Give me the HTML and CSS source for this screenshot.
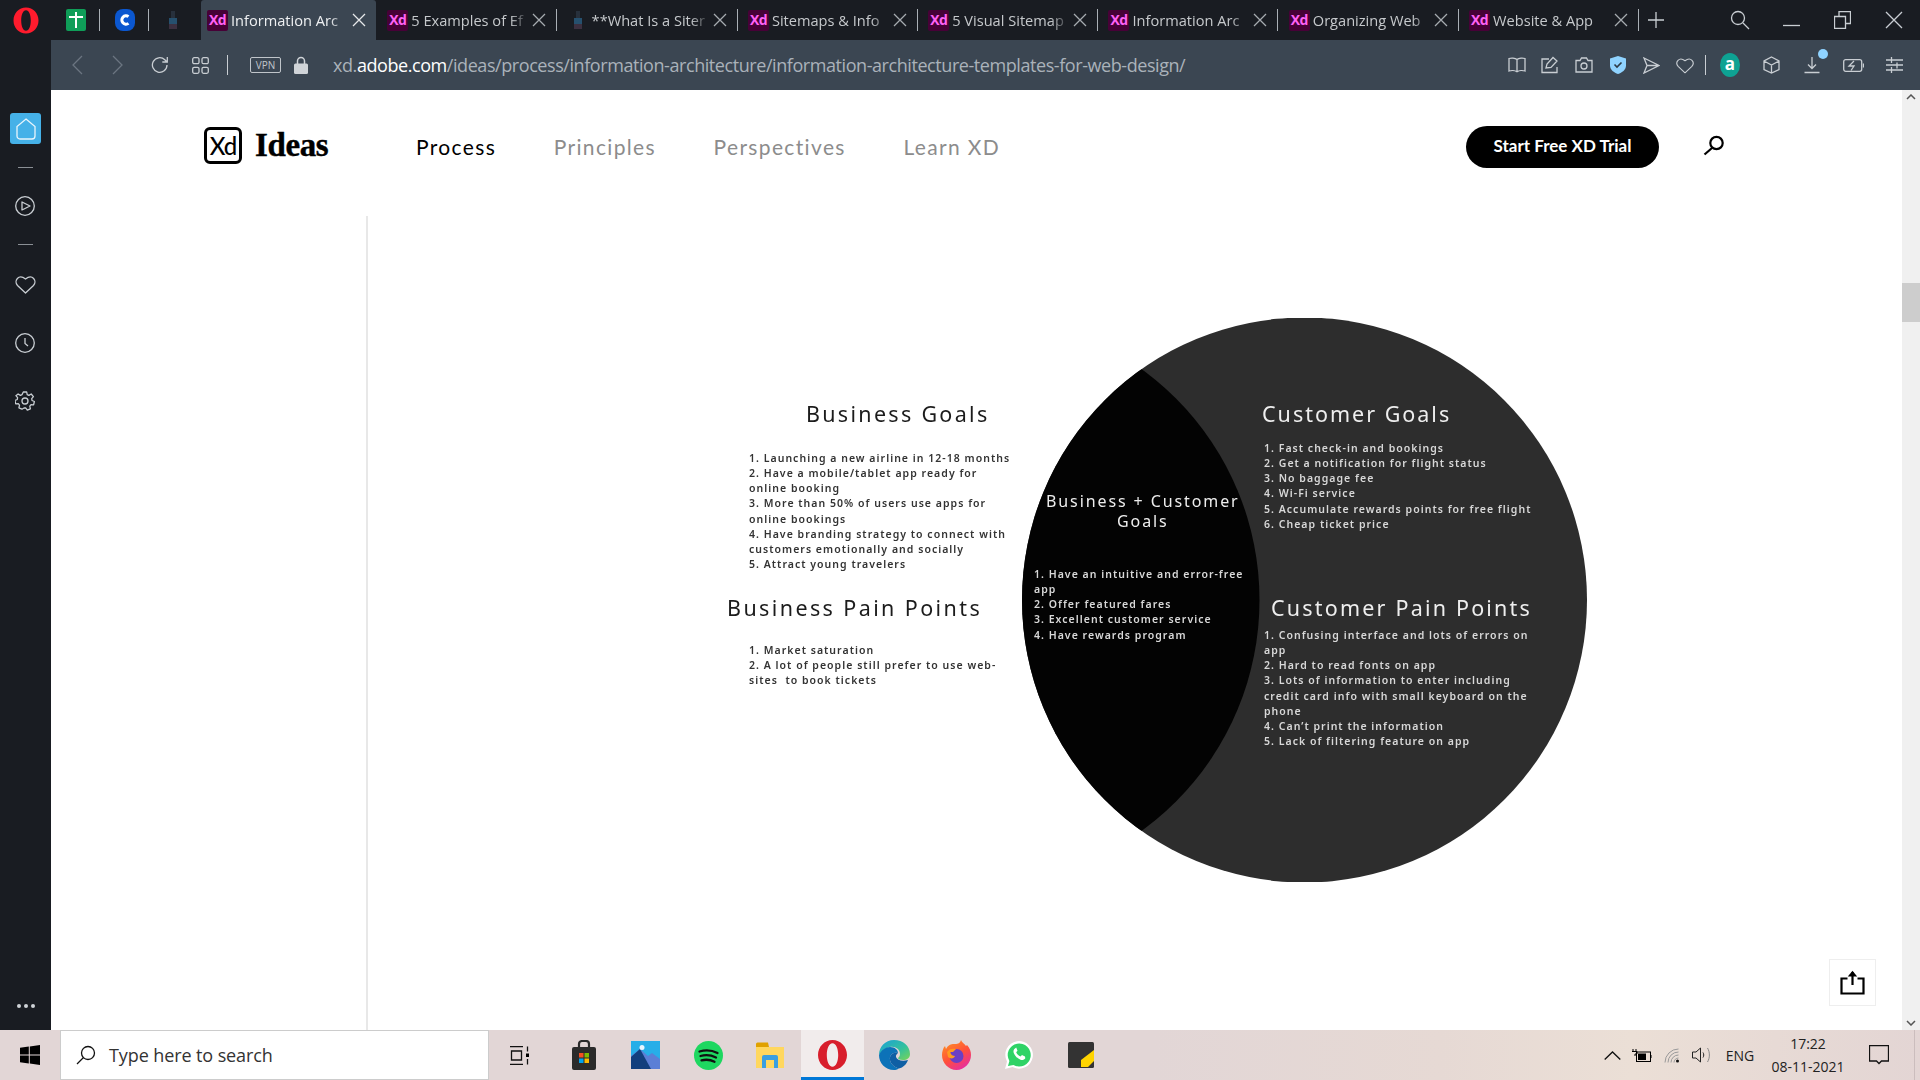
FILE: index.html
```html
<!DOCTYPE html>
<html lang="en">
<head>
<meta charset="utf-8">
<title>Information Architecture Templates</title>
<link rel="stylesheet" href="styles.css">
</head>
<body>
<div class="tabbar">
  <div class="opera-spot">
    <svg width="26" height="27" viewBox="0 0 26 27"><path fill="#ff1b2d" fill-rule="evenodd" d="M13 0.5C20.2 0.5 25.5 6.2 25.5 13.5S20.2 26.5 13 26.5 0.5 20.8 0.5 13.5 5.8 0.5 13 0.5ZM13 3.2C10 3.2 8.2 7.8 8.2 13.5S10 23.8 13 23.8 17.8 19.2 17.8 13.5 16 3.2 13 3.2Z"/></svg>
  </div>
  <div class="pin pin-a">
    <svg width="20" height="22" viewBox="0 0 20 22"><rect width="20" height="22" rx="2" fill="#0f9d58"/><path d="M3 8h14M10 3v16" stroke="#fff" stroke-width="2"/></svg>
  </div>
  <div class="pin pin-b">
    <svg width="20" height="22" viewBox="0 0 20 22"><rect width="20" height="22" rx="8" fill="#0b57d0"/><path d="M13.5 7.6a4.2 4.2 0 1 0 0 6.8" fill="none" stroke="#fff" stroke-width="3"/></svg>
  </div>
  <div class="pin pin-c">
    <svg width="10" height="20" viewBox="0 0 10 20"><rect x="3" y="1" width="4" height="7" fill="#27303c"/><rect x="1" y="8" width="8" height="6" fill="#26506e"/><rect x="1" y="14" width="8" height="5" fill="#3c3040"/></svg>
  </div>

  <div class="tab tab-active"><span class="xd">Xd</span><span class="tab-title">Information Arc</span><svg class="tab-x" width="14" height="14" viewBox="0 0 14 14"><path d="M1 1l12 12M13 1L1 13"/></svg></div><i class="tab-sep tab-sep-none"></i>
  <div class="tab"><span class="xd">Xd</span><span class="tab-title">5 Examples of Ef</span><svg class="tab-x" width="14" height="14" viewBox="0 0 14 14"><path d="M1 1l12 12M13 1L1 13"/></svg></div><i class="tab-sep"></i>
  <div class="tab"><span class="figure"><svg width="10" height="20" viewBox="0 0 10 20"><rect x="3" y="1" width="4" height="7" fill="#27303c"/><rect x="1" y="8" width="8" height="6" fill="#26506e"/><rect x="1" y="14" width="8" height="5" fill="#3c3040"/></svg></span><span class="tab-title">**What Is a Siter</span><svg class="tab-x" width="14" height="14" viewBox="0 0 14 14"><path d="M1 1l12 12M13 1L1 13"/></svg></div><i class="tab-sep"></i>
  <div class="tab"><span class="xd">Xd</span><span class="tab-title">Sitemaps &amp; Info</span><svg class="tab-x" width="14" height="14" viewBox="0 0 14 14"><path d="M1 1l12 12M13 1L1 13"/></svg></div><i class="tab-sep"></i>
  <div class="tab"><span class="xd">Xd</span><span class="tab-title">5 Visual Sitemap</span><svg class="tab-x" width="14" height="14" viewBox="0 0 14 14"><path d="M1 1l12 12M13 1L1 13"/></svg></div><i class="tab-sep"></i>
  <div class="tab"><span class="xd">Xd</span><span class="tab-title">Information Arc</span><svg class="tab-x" width="14" height="14" viewBox="0 0 14 14"><path d="M1 1l12 12M13 1L1 13"/></svg></div><i class="tab-sep"></i>
  <div class="tab"><span class="xd">Xd</span><span class="tab-title">Organizing Web</span><svg class="tab-x" width="14" height="14" viewBox="0 0 14 14"><path d="M1 1l12 12M13 1L1 13"/></svg></div><i class="tab-sep"></i>
  <div class="tab"><span class="xd">Xd</span><span class="tab-title">Website &amp; App</span><svg class="tab-x" width="14" height="14" viewBox="0 0 14 14"><path d="M1 1l12 12M13 1L1 13"/></svg></div><i class="tab-sep"></i>

  <div class="plus"><svg class="ln" width="16" height="16" viewBox="0 0 16 16"><path d="M0 8h16M8 0v16"/></svg></div>
  <div class="win-controls">
    <div class="win-slot"><svg class="ln" width="20" height="20" viewBox="0 0 20 20"><circle cx="8" cy="8" r="6.5"/><path d="M13 13l6 6"/></svg></div>
    <div class="win-slot"><svg class="ln" width="17" height="17" viewBox="0 0 17 17"><path d="M0 13.5h17"/></svg></div>
    <div class="win-slot"><svg class="ln" width="17" height="18" viewBox="0 0 17 18"><path d="M0.5 5.5h11v12h-11zM5 5.5V0.5h11.5v12H11.5"/></svg></div>
    <div class="win-slot"><svg class="ln" width="18" height="18" viewBox="0 0 18 18"><path d="M1 1l16 16M17 1L1 17"/></svg></div>
  </div>
</div>

<div class="shell">
  <aside class="sidebar">
    <div class="home"><svg class="ln" width="20" height="22" viewBox="0 0 20 22"><path d="M10 1L19 8.5V18a3 3 0 0 1-3 3H4a3 3 0 0 1-3-3V8.5Z"/></svg></div>
    <hr class="side-rule side-rule-a">
    <div class="side-slot side-play"><svg class="ln" width="20" height="20" viewBox="0 0 20 20"><circle cx="10" cy="10" r="9.3"/><path d="M7 6l8 4-8 4z" stroke-linejoin="round"/></svg></div>
    <hr class="side-rule side-rule-b">
    <div class="side-slot side-heart"><svg class="ln" width="21" height="19" viewBox="0 0 21 19"><path d="M10.5 18L2.5 10.5C-1.5 6 3.5-1.5 10.5 4 17.500-1.500 22.500 6 18.500 10.500Z" stroke-linejoin="round"/></svg></div>
    <div class="side-slot side-clock"><svg class="ln" width="20" height="20" viewBox="0 0 20 20"><circle cx="10" cy="10" r="9.300"/><path d="M10 5v5.500l3 2.500"/></svg></div>
    <div class="side-slot side-gear"><svg class="ln" width="20" height="20" viewBox="0 0 20 20"><circle cx="10" cy="10" r="3"/><path d="M8.300 1h3.400l.5 2.600 1.700.8 2.300-1.400 2.200 2.700-1.700 2 .3 1.800 2.400 1-.8 3.300-2.600-.1-1.200 1.500.6 2.600-3.100 1.400-1.500-2.200h-1.800L7 18.200l-3.100-1.400.6-2.600-1.200-1.500-2.600.1-.8-3.300 2.400-1 .3-1.800-1.700-2L3.100 3l2.300 1.400 1.700-.8z" stroke-linejoin="round"/></svg></div>
    <div class="side-dots"><i></i><i></i><i></i></div>
  </aside>

  <div class="column">
    <div class="addressbar">
      <div class="nav-slot dim"><svg class="ln" width="11" height="20" viewBox="0 0 11 20"><path d="M10 1L1 10l9 9"/></svg></div>
      <div class="nav-slot dim"><svg class="ln" width="11" height="20" viewBox="0 0 11 20"><path d="M1 1l9 9-9 9"/></svg></div>
      <div class="nav-slot nav-reload"><svg class="ln" width="18" height="18" viewBox="0 0 18 18"><path d="M16 9a7.300 7.300 0 1 1-2.200-5.200L16 6M16.300 1v5h-5"/></svg></div>
      <div class="nav-slot"><svg class="ln" width="17" height="17" viewBox="0 0 17 17"><rect x=".7" y=".7" width="6.300" height="6" rx="1.500"/><rect x="10" y=".7" width="6.300" height="6" rx="1.500"/><rect x=".7" y="10.300" width="6.300" height="6" rx="1.500"/><rect x="10" y="10.300" width="6.300" height="6" rx="1.500"/></svg></div>
      <i class="bar-sep bar-sep-left"></i>
      <span class="vpn">VPN</span>
      <svg class="lock" width="14" height="18" viewBox="0 0 14 18"><path d="M3.500 8V5a3.500 3.500 0 0 1 7 0v3" fill="none" stroke="#d0d4d8" stroke-width="1.500"/><rect y="7.500" width="14" height="10.500" rx="1.500" fill="#d0d4d8"/></svg>
      <div class="url">xd.<b>adobe.com</b>/ideas/process/information-architecture/information-architecture-templates-for-web-design/</div>
      <div class="bar-tools">
        <div class="tool"><svg class="ln" width="18" height="16" viewBox="0 0 18 16"><path d="M9 2.500C7 .8 3 .8 1 1.500v12.500c2-.7 6-.7 8 .8 2-1.500 6-1.500 8-.8V1.500C15 .8 11 .8 9 2.500zM9 2.500v12.300"/></svg></div>
        <div class="tool"><svg class="ln" width="18" height="18" viewBox="0 0 18 18"><path d="M8 3H1v13.500h15V11M5 12l1-4 6-6.500 4 3.500-6 6.500zM1 16.500h15"/></svg></div>
        <div class="tool"><svg class="ln" width="18" height="16" viewBox="0 0 18 16"><path d="M1 3.500h4l1.500-2.500h5L13 3.500h4V15H1z"/><circle cx="9" cy="9" r="3"/></svg></div>
        <div class="tool"><svg width="16" height="18" viewBox="0 0 16 18"><path d="M8 0l8 2.500v7C16 14 12 16.500 8 18 4 16.500 0 14 0 9.500v-7z" fill="#8fd3ff"/><path d="M4.500 8.500l2.500 2.500 4.500-4.500" fill="none" stroke="#2d3a46" stroke-width="1.600"/></svg></div>
        <div class="tool"><svg class="ln" width="17" height="17" viewBox="0 0 17 17"><path d="M1 1l15 7.500L1 16l3-7.500zM4 8.500h12"/></svg></div>
        <div class="tool"><svg class="ln" width="18" height="17" viewBox="0 0 21 19"><path d="M10.500 18L2.500 10.500C-1.500 6 3.500-1.500 10.500 4 17.500-1.500 22.500 6 18.500 10.500Z" stroke-linejoin="round"/></svg></div>
        <i class="bar-sep bar-sep-right"></i>
        <div class="tool tool-wide"><span class="amz">a</span></div>
        <div class="tool tool-wide"><svg class="ln" width="17" height="18" viewBox="0 0 17 18"><path d="M8.500 1L16 5v8.500L8.500 17 1 13.500V5zM1 5l7.500 4L16 5M8.500 9v8"/></svg></div>
        <div class="tool tool-wide tool-dl"><svg class="ln" width="16" height="18" viewBox="0 0 16 18"><path d="M8 1v11M4 8.500L8 12.500l4-4M0.500 16.500h15"/></svg><i class="dl-dot"></i></div>
        <div class="tool tool-wide"><svg class="ln" width="21" height="13" viewBox="0 0 21 13"><rect x=".7" y=".7" width="18" height="11.600" rx="2"/><path d="M20.500 4.500v4M11 2L6 7h5l-3 4.500"/></svg></div>
        <div class="tool tool-wide"><svg class="ln" width="17" height="16" viewBox="0 0 17 16"><path d="M0 3h17M0 8h17M0 13h17"/><path d="M5.500 0v6M11 5.500v6M5.500 10v6"/></svg></div>
      </div>
    </div>

    <div class="viewport">
      <main class="page">
        <header class="site-header">
          <div class="brand">
            <span class="xd-badge">Xd</span>
            <span class="brand-name">Ideas</span>
          </div>
          <nav class="site-nav">
            <a class="nav-on">Process</a>
            <a>Principles</a>
            <a>Perspectives</a>
            <a>Learn XD</a>
          </nav>
          <a class="cta">Start Free XD Trial</a>
          <svg class="site-search" width="24" height="24" viewBox="0 0 24 24"><circle cx="14.500" cy="9" r="6.200" fill="none" stroke="#000" stroke-width="2.200"/><path d="M10 14L2.500 20.500" stroke="#000" stroke-width="2.200"/></svg>
        </header>

        <div class="article">
          <div class="rail"></div>
          <div class="stage">
            <div class="diagram">
              <svg class="venn" width="565" height="564" viewBox="0 0 565 564">
                <defs><clipPath id="lens"><circle cx="-47.500" cy="282" r="285"/></clipPath></defs>
                <circle cx="282.500" cy="282" r="282.500" fill="#2d2d2d"/>
                <circle cx="282.500" cy="282" r="282.500" fill="#030303" clip-path="url(#lens)"/>
              </svg>

              <h2 class="head head-bg">Business Goals</h2>
              <p class="list list-bg">1. Launching a new airline in 12-18 months<br>2. Have a mobile/tablet app ready for<br>online booking<br>3. More than 50% of users use apps for<br>online bookings<br>4. Have branding strategy to connect with<br>customers emotionally and socially<br>5. Attract young travelers</p>
              <h2 class="head head-bp">Business Pain Points</h2>
              <p class="list list-bp">1. Market saturation<br>2. A lot of people still prefer to use web-<br>sites&nbsp; to book tickets</p>

              <h2 class="head head-light head-both">Business + Customer<br>Goals</h2>
              <p class="list list-light list-both">1. Have an intuitive and error-free<br>app<br>2. Offer featured fares<br>3. Excellent customer service<br>4. Have rewards program</p>

              <h2 class="head head-light head-cg">Customer Goals</h2>
              <p class="list list-light list-cg">1. Fast check-in and bookings<br>2. Get a notification for flight status<br>3. No baggage fee<br>4. Wi-Fi service<br>5. Accumulate rewards points for free flight<br>6. Cheap ticket price</p>
              <h2 class="head head-light head-cp">Customer Pain Points</h2>
              <p class="list list-light list-cp">1. Confusing interface and lots of errors on<br>app<br>2. Hard to read fonts on app<br>3. Lots of information to enter including<br>credit card info with small keyboard on the<br>phone<br>4. Can’t print the information<br>5. Lack of filtering feature on app</p>
            </div>
          </div>
          <button class="share" type="button" aria-label="Share">
            <svg width="25" height="25" viewBox="0 0 25 25"><path d="M7.500 8.500H1.500v15h22v-15h-6" fill="none" stroke="#000" stroke-width="2.200"/><path d="M12.500 15V2" stroke="#000" stroke-width="2.200"/><path d="M7.800 6.500L12.500 .8l4.700 5.700z" fill="#000"/></svg>
          </button>
        </div>
      </main>

      <div class="scrollbar">
        <svg class="sb-arrow" width="10" height="6" viewBox="0 0 10 6"><path d="M1 5l4-4 4 4" fill="none" stroke="#555" stroke-width="1.500"/></svg>
        <div class="sb-thumb"></div>
        <svg class="sb-arrow sb-arrow-end" width="10" height="6" viewBox="0 0 10 6"><path d="M1 1l4 4 4-4" fill="none" stroke="#555" stroke-width="1.500"/></svg>
      </div>
    </div>
  </div>
</div>

<footer class="taskbar">
  <div class="start"><svg width="20" height="20" viewBox="0 0 20 20"><path fill="#000" d="M0 2.800L8.800 1.500V9.500H0zM9.800 1.400L20 0V9.500H9.800zM0 10.500H8.800V18.500L0 17.200zM9.800 10.500H20V20L9.800 18.600z"/></svg></div>
  <div class="searchbox">
    <svg class="ln-dark" width="20" height="20" viewBox="0 0 20 20"><circle cx="12" cy="8" r="6.500"/><path d="M7.500 12.500L1 19"/></svg>
    <span>Type here to search</span>
  </div>
  <div class="apps">
    <div class="app app-first"><svg class="ln-dark" width="20" height="19" viewBox="0 0 20 19"><path d="M1 .5h13M1 18.500h13M2.500 5h10v9h-10zM18.500 .5v5M18.500 13v5.500"/><rect x="17" y="7.500" width="3" height="3.500" fill="#000" stroke="none"/></svg></div>
    <div class="app"><svg width="24" height="30" viewBox="0 0 24 30"><path d="M7 8V4a3 3 0 0 1 3-3h4a3 3 0 0 1 3 3v4" fill="none" stroke="#2a2a2a" stroke-width="2.200"/><rect y="7" width="24" height="23" rx="2" fill="#2b2b2b"/><rect x="7" y="13" width="4.500" height="4.500" fill="#f25022"/><rect x="12.500" y="13" width="4.500" height="4.500" fill="#7fba00"/><rect x="7" y="18.500" width="4.500" height="4.500" fill="#00a4ef"/><rect x="12.500" y="18.500" width="4.500" height="4.500" fill="#ffb900"/></svg></div>
    <div class="app"><svg width="29" height="28" viewBox="0 0 29 28"><rect width="29" height="28" fill="#27aee8"/><path d="M0 28V15l9-7 8 7 4-3 8 6v10z" fill="#5b7fd6"/><path d="M0 28V16l9-8 11 20z" fill="#123f7d"/><circle cx="11" cy="6.500" r="2.500" fill="#e8f6ff"/></svg></div>
    <div class="app"><svg width="29" height="29" viewBox="0 0 29 29"><circle cx="14.500" cy="14.500" r="14.500" fill="#1ed760"/><path d="M5.500 10.500c6-1.800 12.500-1.300 18 1.500M6.500 15c5-1.400 10.500-1 15.500 1.500M7.500 19.300c4.500-1 9-.7 13 1.400" fill="none" stroke="#111" stroke-width="2.300" stroke-linecap="round"/></svg></div>
    <div class="app"><svg width="28" height="26" viewBox="0 0 28 26"><path d="M0 2a1.500 1.500 0 0 1 1.500-1.500H12L13 5H0z" fill="#e0a100"/><rect y="5" width="28" height="21" fill="#ffd75e"/><path d="M6 26V15a2 2 0 0 1 2-2h12a2 2 0 0 1 2 2v11h-4v-8h-8v8z" fill="#3a9fe0"/></svg></div>
    <div class="app app-on"><svg width="29" height="30" viewBox="0 0 29 30"><path fill="#d81e2c" fill-rule="evenodd" d="M14.500 0C22.500 0 29 6.700 29 15S22.500 30 14.500 30 0 23.300 0 15 6.500 0 14.500 0ZM14.500 3.200C11 3.200 8.800 8.500 8.800 15S11 26.800 14.500 26.800 20.200 21.500 20.200 15 18 3.200 14.500 3.200Z"/></svg></div>
    <div class="app"><svg width="31" height="30" viewBox="0 0 31 30"><defs><linearGradient id="edgeg" x1="0" y1="0" x2="1" y2="1"><stop offset="0" stop-color="#1aa0d8"/><stop offset=".6" stop-color="#35c29b"/><stop offset="1" stop-color="#7ad455"/></linearGradient></defs><path d="M15 0C24 0 31 6 31 14c0 4-3 6-7 6-3 0-5-1-5-2 1-1 2-2 2-4 0-5-5-8-10-7C6 8 2 12 0 15 0 7 6 0 15 0Z" fill="url(#edgeg)"/><path d="M0 15C2 10 7 7 11 7c5 0 8 3 8 6-3-1-7 0-8 4-1 5 3 10 9 11.500C18 29.500 16.500 30 15 30 6 30 0 23 0 15Z" fill="#0c72b8"/><path d="M20 28.500c-6-1.500-10-6.500-9-11.500 1-4 5-5 8-4-1 1-2.500 2-2 4 1 3 6 5 12 3-1.500 4.500-5 7.500-9 8.500Z" fill="#0f5fa4"/></svg></div>
    <div class="app"><svg width="29" height="30" viewBox="0 0 29 30"><defs><linearGradient id="ffg" x1="0" y1="0" x2=".6" y2="1"><stop offset="0" stop-color="#ff9a1f"/><stop offset=".6" stop-color="#ff4f3a"/><stop offset="1" stop-color="#e8309a"/></linearGradient></defs><path d="M19 0c1 3 3 3 5 6l1-1c3 3 4 7 4 10 0 8-6.500 15-14.500 15S0 23 0 15c0-3 1-7 3-9l1 3c2-4 5-5 8-5 3 0 6 0 7-4Z" fill="url(#ffg)"/><circle cx="14.500" cy="16" r="7" fill="#6b3fc4"/><path d="M5 12c2-3 5-4 9-3l-3 3h-3c1 3 3 4 5 4-1 3-5 3-7 1z" fill="#ff9a1f"/></svg></div>
    <div class="app"><svg width="28" height="28" viewBox="0 0 28 28"><path d="M0 28l2-7.500A13.800 13.800 0 1 1 7.500 26z" fill="#fff"/><path d="M3 25l1.400-5A11.500 11.500 0 1 1 8.500 24z" fill="#2fd366"/><path d="M10 7.500c-1.500 1-2 3-1 5 1.500 3 3.500 5 6.500 6.300 2 .7 3.800 0 4.800-1.500l-.3-1.800-3-1.500-1.500 1.500c-2-.8-3.500-2.300-4.300-4.300l1.300-1.400-1.300-3.200z" fill="#fff"/></svg></div>
    <div class="app"><svg width="26" height="26" viewBox="0 0 26 26"><rect width="26" height="26" rx="1.500" fill="#333"/><path d="M13 25V18L26 8v11l-6 6z" fill="#ffd400"/></svg></div>
  </div>
  <div class="tray">
    <div class="tray-slot"><svg class="ln-dark" width="17" height="9" viewBox="0 0 17 9"><path d="M.7 8.500L8.500 1l7.800 7.500"/></svg></div>
    <div class="tray-slot"><svg width="20" height="13" viewBox="0 0 20 13"><rect x="4.500" y="3" width="14" height="9.500" fill="none" stroke="#000"/><rect x="6" y="4.500" width="8" height="6.500" fill="#000"/><path d="M19 6v3" stroke="#000"/><path d="M1 0v2M4 0v2M0 2.500h5V5H3v2" fill="none" stroke="#000"/></svg></div>
    <div class="tray-slot"><svg width="17" height="15" viewBox="0 0 17 15" fill="none" stroke="#999"><path d="M1 14.500A13.500 13.500 0 0 1 14.500 1M4 14.500A10.500 10.500 0 0 1 14.500 4M7 14.500A7.500 7.500 0 0 1 14.500 7M10 14.500a4.500 4.500 0 0 1 4.500-4.500"/><circle cx="13.500" cy="13" r="1.500" fill="#111" stroke="none"/></svg></div>
    <div class="tray-slot"><svg width="20" height="16" viewBox="0 0 20 16" fill="none" stroke="#222"><path d="M.5 5H4L8.500 1v14L4 11H.5z"/><path d="M11 5.500c1 1.500 1 3.500 0 5"/><path d="M15.500 1c2.500 4 2.500 10 0 14" stroke="#888"/></svg></div>
    <div class="tray-lang">ENG</div>
    <div class="tray-clock"><span>17:22</span><span>08-11-2021</span></div>
    <div class="tray-note"><svg class="ln-dark" width="20" height="20" viewBox="0 0 20 20"><path d="M.5 .5h19v15.500h-7l-2.500 2.500-2.500-2.500h-7z"/></svg></div>
    <div class="tray-end"></div>
  </div>
</footer>
</body>
</html>
```
FILE: styles.css
```css
* { box-sizing: border-box; }
html, body { margin: 0; height: 100%; overflow: hidden; background: #fff; }
body { width: 1920px; height: 1080px; font-family: "Open Sans", "Noto Sans", sans-serif; display: flex; flex-direction: column; }
svg { display: block; flex: none; }
.ln { fill: none; stroke: #c9ced3; stroke-width: 1.3; }
.ln-dark { fill: none; stroke: #111; stroke-width: 1.3; }

/* tab strip */
.tabbar { height: 40px; flex: none; background: #191c22; display: flex; align-items: center; }
.opera-spot { width: 51px; display: flex; justify-content: center; }
.pin { height: 40px; display: flex; align-items: center; justify-content: center; position: relative; }
.pin-a { width: 49px; }
.pin-b { width: 49px; }
.pin-c { width: 52px; padding-right: 4px; }
.pin-a::after, .pin-b::after { content: ""; position: absolute; right: 0; top: 9px; height: 22px; width: 1px; background: #aab0b6; }
.tab { width: 175px; height: 40px; flex: none; display: flex; align-items: center; padding-left: 6px; color: #c6c9cc; border-radius: 3px 3px 0 0; }
.tab-active { background: #3b4652; color: #eef0f2; }
.tab-sep { width: 1px; height: 22px; margin-right: 4.3px; background: #aab0b6; flex: none; }
.tab-sep-none { background: transparent; }
.xd { width: 21px; height: 21px; flex: none; background: #470137; color: #ff61f6; font: 700 14px/20px "Open Sans", sans-serif; text-align: center; border-radius: 2px; letter-spacing: -.6px; }
.figure { width: 21px; flex: none; display: flex; justify-content: center; }
.tab-title { width: 118px; flex: none; margin-left: 3px; font-size: 14.6px; white-space: nowrap; overflow: hidden; -webkit-mask-image: linear-gradient(90deg, #000 84%, transparent 100%); mask-image: linear-gradient(90deg, #000 84%, transparent 100%); }
.tab-x { flex: none; margin-left: 3px; fill: none; stroke: #a6abb0; stroke-width: 1.3; }
.tab-active .tab-x { stroke: #e6e8ea; }
.plus { width: 26px; display: flex; justify-content: center; }
.win-controls { margin-left: auto; display: flex; }
.win-slot { width: 51.5px; height: 40px; display: flex; align-items: center; justify-content: center; }

/* shell */
.shell { flex: 1; min-height: 0; display: flex; }
.sidebar { width: 51px; flex: none; background: #191c22; display: flex; flex-direction: column; align-items: center; padding-top: 73px; }
.home { width: 31px; height: 31px; background: #45b1e8; border-radius: 3px; display: flex; align-items: center; justify-content: center; }
.home .ln { stroke: #e8f5fc; }
.side-rule { width: 15px; height: 1px; margin: 0; border: 0; background: #8a8f95; }
.side-rule-a { margin-top: 23px; }
.side-rule-b { margin-top: 28px; }
.side-slot { display: flex; justify-content: center; margin-left: -1px; }
.side-play { margin-top: 28px; }
.side-heart { margin-top: 30px; }
.side-clock { margin-top: 39px; }
.side-gear { margin-top: 38px; }
.side-dots { margin-top: auto; margin-bottom: 22px; display: flex; gap: 3px; }
.side-dots i { width: 4px; height: 4px; border-radius: 50%; background: #cfd3d7; }

.column { flex: 1; min-width: 0; display: flex; flex-direction: column; }
.addressbar { height: 50px; flex: none; background: #3b4652; display: flex; align-items: center; padding-left: 6px; }
.nav-slot { width: 40px; display: flex; justify-content: center; }
.nav-slot.dim .ln { stroke: #6b7581; }
.nav-reload { margin-left: 3px; }
.bar-sep { width: 1px; height: 20px; background: #c9ced3; flex: none; }
.bar-sep-left { margin: 0 22px 0 7px; }
.bar-sep-right { margin: 0 4px 0 3px; }
.vpn { width: 31px; height: 16px; border: 1px solid #c0c5ca; border-radius: 2px; color: #c0c5ca; font-size: 10px; line-height: 14px; text-align: center; flex: none; }
.lock { margin-left: 13px; }
.url { margin-left: 25px; font-size: 18px; color: #aab2ba; white-space: nowrap; letter-spacing: -.43px; }
.url b { font-weight: 400; color: #fff; }
.bar-tools { margin-left: auto; display: flex; align-items: center; padding-right: 5.5px; }
.tool { width: 33.6px; display: flex; justify-content: center; position: relative; }
.tool-wide { width: 41px; }
.amz { width: 20px; height: 24px; border-radius: 50%; background: #0ea293; color: #fff; font: 700 17px/21px "Open Sans", sans-serif; text-align: center; }
.dl-dot { position: absolute; top: -7px; left: 26px; width: 10px; height: 10px; border-radius: 50%; background: #8fd3ff; }

/* page */
.viewport { flex: 1; min-height: 0; display: flex; }
.page { flex: 1; min-width: 0; background: #fff; display: flex; flex-direction: column; }
.site-header { height: 114px; flex: none; margin-bottom: 12px; display: flex; align-items: center; padding: 0 176px 0 153px; }
.brand { width: 212px; flex: none; display: flex; align-items: center; gap: 13px; margin-top: -4px; }
.xd-badge { width: 38px; height: 37px; border: 3px solid #000; border-radius: 6px; font: 500 24px/31px "Lato", sans-serif; letter-spacing: -1px; text-align: center; color: #000; }
.brand-name { font: 700 33px/37px "Liberation Serif", serif; color: #000; letter-spacing: -.4px; -webkit-text-stroke: .4px #000; }
.site-nav { display: flex; gap: 57.6px; font: 400 21px/28px "Lato", sans-serif; letter-spacing: 1.35px; color: #8c8c8c; }
.nav-on { color: #000; }
.cta { margin-left: auto; width: 193px; height: 42px; border-radius: 21px; background: #000; color: #fff; font: 700 17px/40px "Lato", sans-serif; text-align: center; }
.site-search { margin-left: 43px; margin-top: -2px; }

.article { flex: 1; min-height: 0; display: flex; position: relative; }
.rail { width: 317px; flex: none; border-right: 2px solid #e8e8e8; }
.stage { flex: 1; min-width: 0; padding: 102px 0 0 358px; }
.diagram { position: relative; width: 861px; height: 564px; }
.venn { position: absolute; right: 0; top: 0; }
.head, .list { position: absolute; margin: 0; white-space: nowrap; filter: blur(.35px); font-family: "Noto Sans", "Open Sans", sans-serif; }
.head { font-weight: 400; font-size: 21.5px; line-height: 20px; letter-spacing: 2.3px; color: #1c1c1c; }
.list { font-size: 10.5px; line-height: 15.16px; letter-spacing: 1.03px; color: #333; font-weight: 600; }
.head-light { color: #eee; }
.list-light { color: #d8d8d8; }
.head-bg { left: 80px; top: 86px; }
.list-bg { left: 23px; top: 133px; }
.head-bp { left: 1px; top: 280px; letter-spacing: 2.4px; }
.list-bp { left: 23px; top: 325px; }
.head-both { left: 320px; top: 173px; text-align: center; font-size: 16px; line-height: 20px; letter-spacing: 1.9px; }
.list-both { left: 308px; top: 249px; }
.head-cg { left: 536px; top: 86px; letter-spacing: 2px; }
.list-cg { left: 538px; top: 123px; }
.head-cp { left: 545px; top: 280px; letter-spacing: 2.2px; }
.list-cp { left: 538px; top: 310px; }
.share { position: absolute; left: 1778px; top: 743px; width: 47px; height: 47px; padding: 0; background: #fff; border: 1px solid #eee; display: flex; align-items: center; justify-content: center; }

.scrollbar { width: 18px; flex: none; background: #f0f0f0; display: flex; flex-direction: column; align-items: center; padding: 4px 0; }
.sb-arrow-end { margin-top: auto; }
.sb-thumb { width: 18px; height: 39px; margin-top: 183px; background: #cdcdcd; }

/* taskbar */
.taskbar { height: 50px; flex: none; display: flex; align-items: center; background: linear-gradient(90deg, #e2d6d6 0%, #e2d6d6 60%, #e6d9d4 75%, #ebdfd6 85%, #e3d5d4 100%); }
.start { width: 60px; height: 50px; display: flex; align-items: center; justify-content: center; }
.searchbox { width: 429px; height: 50px; background: #fff; border: 1px solid #ccc; display: flex; align-items: center; gap: 13px; padding-left: 15px; font-size: 18px; color: #333; letter-spacing: -.1px; }
.apps { display: flex; padding-left: 1.5px; }
.app { width: 62.2px; height: 50px; display: flex; align-items: center; justify-content: center; }
.app-first { padding-right: 5px; }
.app-on { background: #f1ecec; box-shadow: inset 0 -3px 0 #0078d7; }
.tray { margin-left: auto; display: flex; align-items: center; height: 50px; color: #222; font-size: 14px; }
.tray-slot { width: 30px; display: flex; justify-content: center; }
.tray-lang { width: 46px; text-align: center; }
.tray-clock { width: 90px; display: flex; flex-direction: column; align-items: center; line-height: 23px; }
.tray-note { width: 52px; display: flex; justify-content: center; }
.tray-end { width: 15px; height: 50px; background: linear-gradient(90deg, transparent 9px, #cbbdbd 9px, #cbbdbd 10px, transparent 10px); }
```
